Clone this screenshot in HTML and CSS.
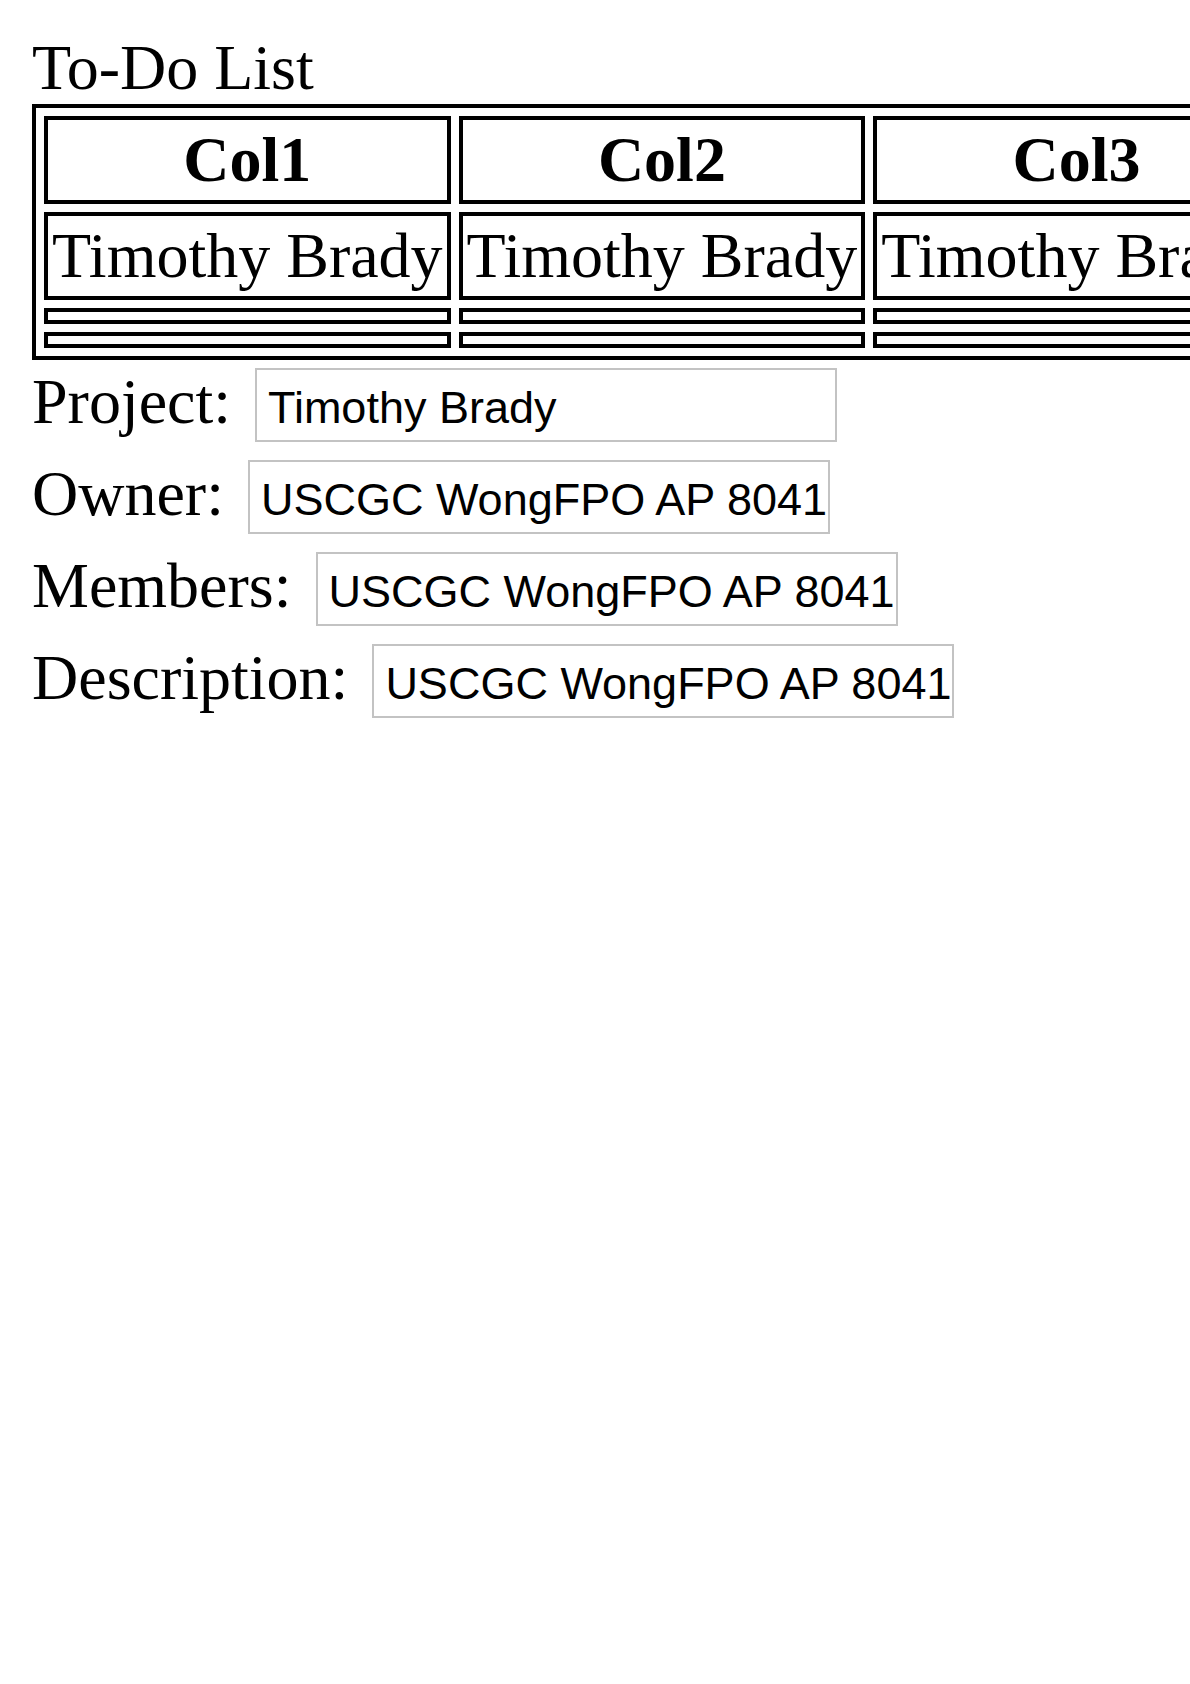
FILE: index.html
```html
<!DOCTYPE html>
<html lang="en">
<head>
<meta charset="utf-8">
<title>To-Do List</title>
<link rel="stylesheet" href="styles.css">
</head>
<body>
<div class="title">To-Do List</div>
<table class="todo">
  <tr>
    <th>Col1</th>
    <th>Col2</th>
    <th>Col3</th>
  </tr>
  <tr>
    <td>Timothy Brady</td>
    <td>Timothy Brady</td>
    <td>Timothy Brady</td>
  </tr>
  <tr>
    <td></td>
    <td></td>
    <td></td>
  </tr>
  <tr>
    <td></td>
    <td></td>
    <td></td>
  </tr>
</table>
<form class="form">
  <div class="row">
    <label class="label" for="project">Project:</label>
    <input class="field" id="project" type="text" value="Timothy Brady">
  </div>
  <div class="row">
    <label class="label" for="owner">Owner:</label>
    <input class="field" id="owner" type="text" value="USCGC WongFPO AP 8041">
  </div>
  <div class="row">
    <label class="label" for="members">Members:</label>
    <input class="field" id="members" type="text" value="USCGC WongFPO AP 8041">
  </div>
  <div class="row">
    <label class="label" for="description">Description:</label>
    <input class="field" id="description" type="text" value="USCGC WongFPO AP 8041">
  </div>
</form>
</body>
</html>
```

FILE: styles.css
```css
html {
  background: #ffffff;
}

body {
  margin: 0;
  padding: 32px;
  font-family: "Liberation Serif", "Times New Roman", serif;
  font-size: 64px;
  color: #000000;
}

.title {
  line-height: 72px;
  height: 72px;
}

.todo {
  border: 4px solid #000000;
  border-collapse: separate;
  border-spacing: 8px;
  font-size: 64px;
}

.todo th,
.todo td {
  border: 4px solid #000000;
  padding: 4px;
  line-height: 72px;
  white-space: nowrap;
}

.todo th {
  font-weight: bold;
  text-align: center;
}

.todo td {
  text-align: left;
}

.form {
  margin: 0;
}

.row {
  display: flex;
  align-items: flex-start;
}

.label {
  margin-top: 8px;
  line-height: 68px;
  white-space: nowrap;
}

.field {
  box-sizing: border-box;
  width: 582px;
  height: 74px;
  margin: 8px 0 10px 24px;
  padding: 5px 0 0 11px;
  border: 2px solid #c3c3c3;
  border-radius: 0;
  font-family: "Liberation Sans", Arial, sans-serif;
  font-size: 45px;
  color: #000000;
  background: #ffffff;
  outline: none;
}
```
